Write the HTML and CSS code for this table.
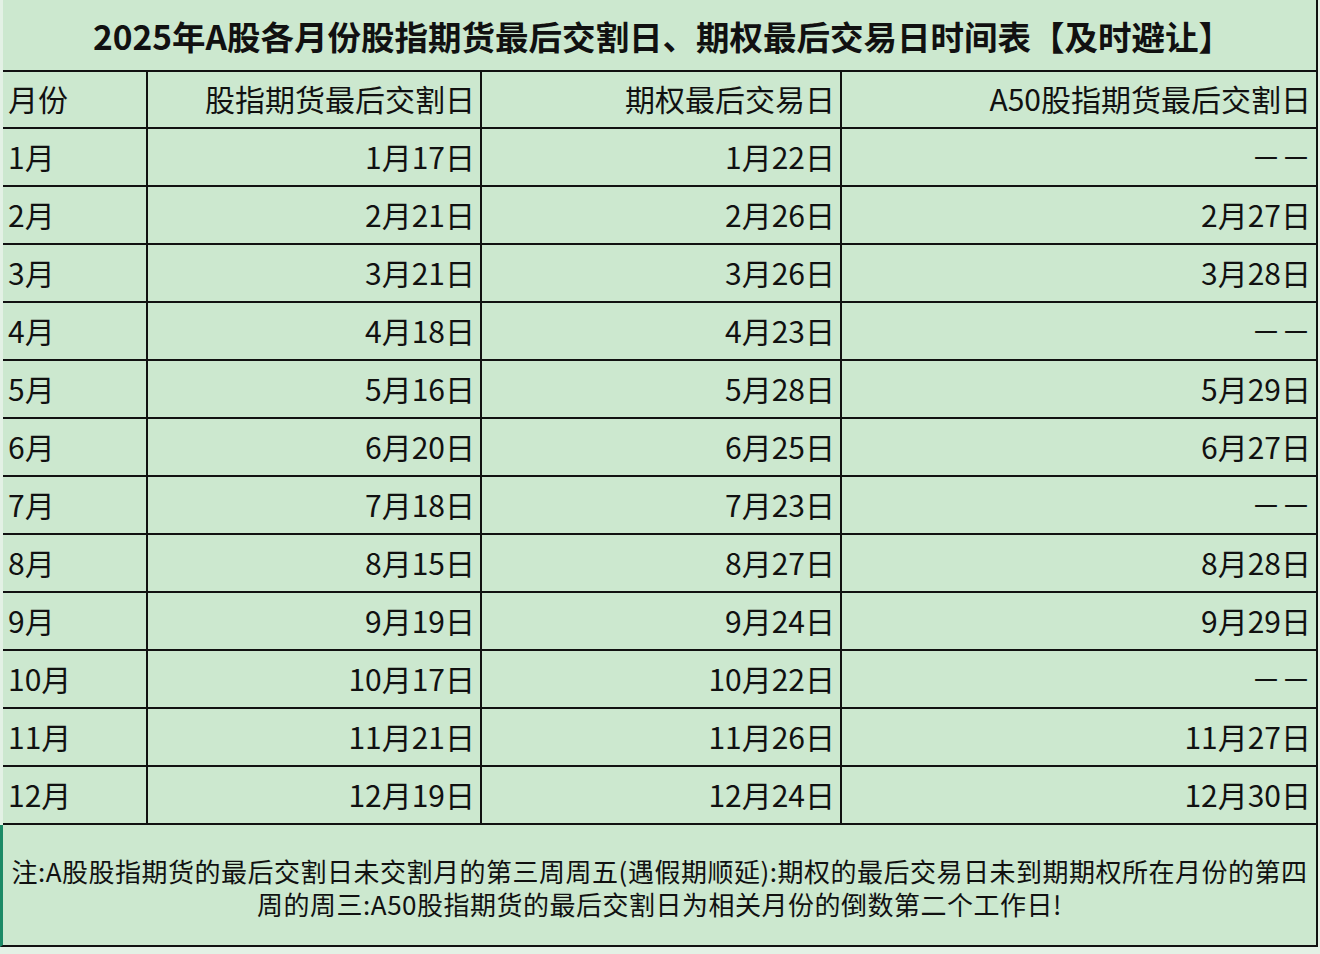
FILE: index.html
```html
<!DOCTYPE html>
<html lang="zh-CN">
<head>
<meta charset="utf-8">
<title>2025年A股各月份股指期货最后交割日、期权最后交易日时间表</title>
<link rel="stylesheet" href="styles.css">
</head>
<body>
<div class="sheet">
  <div class="title">2025年A股各月份股指期货最后交割日、期权最后交易日时间表【及时避让】</div>
  <table class="grid">
    <colgroup>
      <col class="c1"><col class="c2"><col class="c3"><col class="c4">
    </colgroup>
    <tr class="head"><td class="month">月份</td><td>股指期货最后交割日</td><td>期权最后交易日</td><td>A50股指期货最后交割日</td></tr>
    <tr><td class="month">1月</td><td>1月17日</td><td>1月22日</td><td>－－</td></tr>
    <tr><td class="month">2月</td><td>2月21日</td><td>2月26日</td><td>2月27日</td></tr>
    <tr><td class="month">3月</td><td>3月21日</td><td>3月26日</td><td>3月28日</td></tr>
    <tr><td class="month">4月</td><td>4月18日</td><td>4月23日</td><td>－－</td></tr>
    <tr><td class="month">5月</td><td>5月16日</td><td>5月28日</td><td>5月29日</td></tr>
    <tr><td class="month">6月</td><td>6月20日</td><td>6月25日</td><td>6月27日</td></tr>
    <tr><td class="month">7月</td><td>7月18日</td><td>7月23日</td><td>－－</td></tr>
    <tr><td class="month">8月</td><td>8月15日</td><td>8月27日</td><td>8月28日</td></tr>
    <tr><td class="month">9月</td><td>9月19日</td><td>9月24日</td><td>9月29日</td></tr>
    <tr><td class="month">10月</td><td>10月17日</td><td>10月22日</td><td>－－</td></tr>
    <tr><td class="month">11月</td><td>11月21日</td><td>11月26日</td><td>11月27日</td></tr>
    <tr><td class="month">12月</td><td>12月19日</td><td>12月24日</td><td>12月30日</td></tr>
  </table>
  <div class="note">注:A股股指期货的最后交割日未交割月的第三周周五(遇假期顺延):期权的最后交易日未到期期权所在月份的第四<br>周的周三:A50股指期货的最后交割日为相关月份的倒数第二个工作日!</div>
</div>
</body>
</html>
```

FILE: styles.css
```css
html, body {
  margin: 0;
  padding: 0;
}
body {
  background: #e3f1e5;
  width: 1320px;
  height: 954px;
  overflow: hidden;
  font-family: "Noto Sans CJK SC", "Noto Sans", sans-serif;
  color: #111;
}
.sheet {
  margin-left: 3px;
  width: 1313px;
  background: #cce8cf;
  border-right: 2px solid #111;
}
.title {
  height: 70px;
  display: flex;
  align-items: center;
  justify-content: center;
  font-size: 33.5px;
  font-weight: 700;
  padding-left: 6px;
  box-sizing: border-box;
}
.grid {
  width: 1313px;
  table-layout: fixed;
  border-collapse: collapse;
  font-size: 30px;
}
.c1 { width: 144px; }
.c2 { width: 334px; }
.c3 { width: 360px; }
.c4 { width: 475px; }
.grid td {
  border: 2px solid #111;
  height: 53px;
  padding: 0 5px 3px 4px;
  text-align: right;
  vertical-align: middle;
  line-height: 1;
  white-space: nowrap;
}
.grid tr.head td {
  height: 52px;
}
.grid td:first-child {
  border-left: none;
}
.grid td:last-child {
  border-right: none;
}
.grid td.month {
  text-align: left;
  padding-left: 5px;
}
.note {
  margin-left: -3px;
  border-left: 3px solid #1b8a66;
  border-bottom: 2px solid #111;
  height: 122px;
  box-sizing: border-box;
  display: flex;
  align-items: center;
  justify-content: center;
  text-align: center;
  font-size: 26px;
  letter-spacing: 0.5px;
  line-height: 33px;
  padding-top: 4px;
}
```
